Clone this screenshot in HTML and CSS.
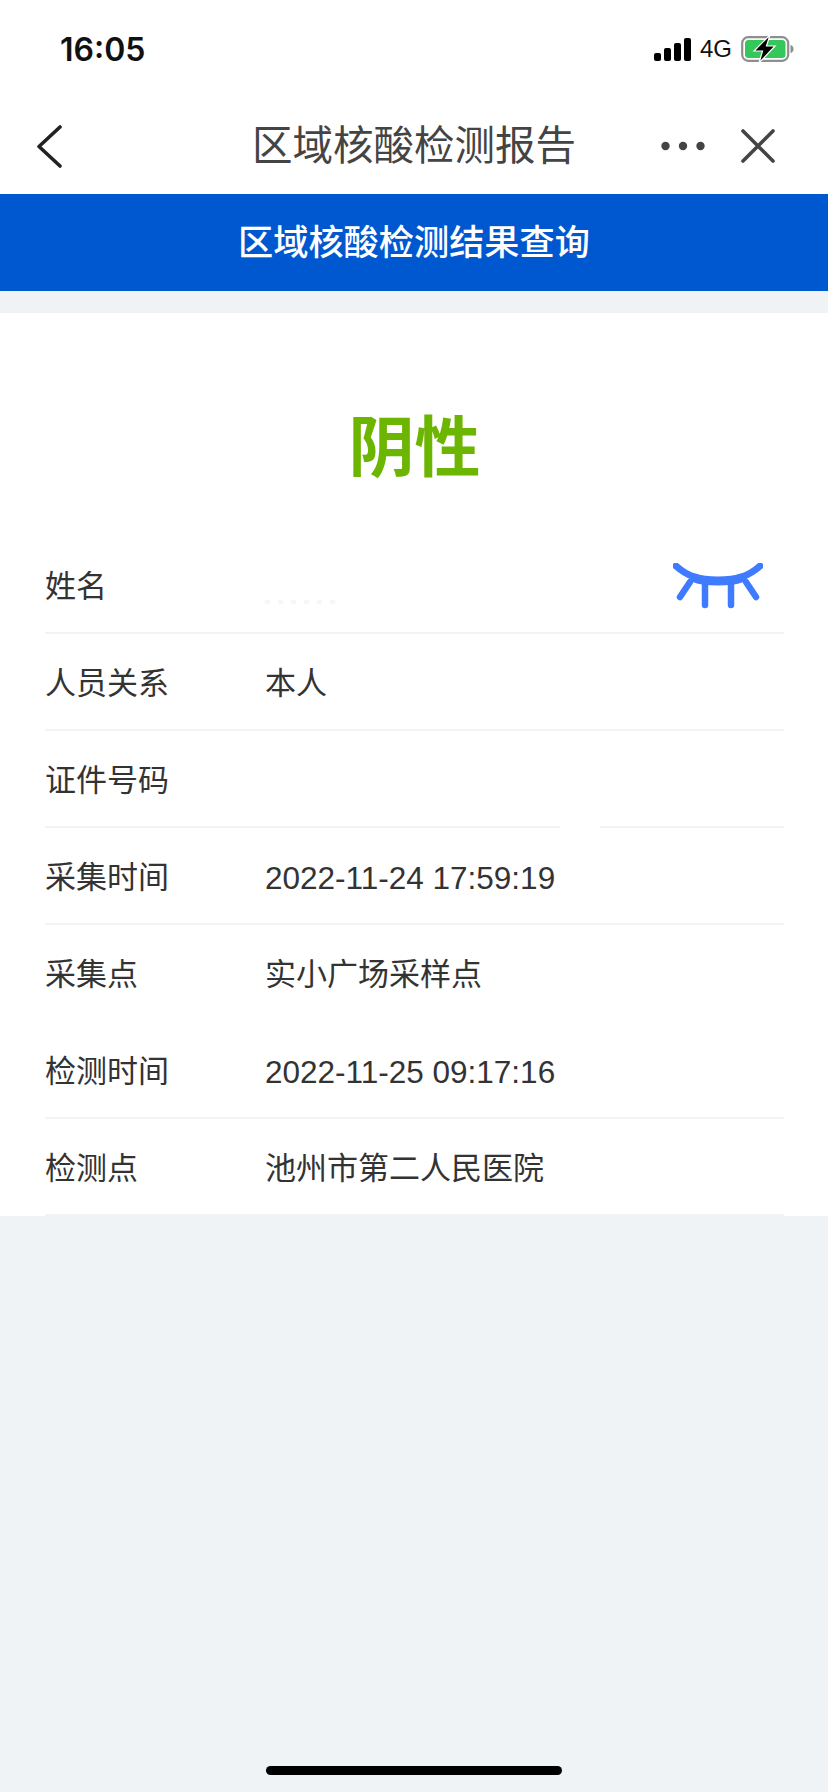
FILE: index.html
```html
<!DOCTYPE html>
<html lang="zh-CN">
<head>
    <meta charset="UTF-8">
    <meta name="viewport" content="width=device-width, initial-scale=1.0">
    <title>区域核酸检测报告</title>
    <link rel="stylesheet" href="styles.css">
</head>
<body>

    <div class="status-bar">
        <span class="clock">16:05</span>
        <div class="status-icons">
            <svg class="signal" width="37" height="23" viewBox="0 0 37 23">
                <rect x="0" y="15" width="7" height="8" rx="2"/>
                <rect x="10" y="10" width="7" height="13" rx="2"/>
                <rect x="20" y="5" width="7" height="18" rx="2"/>
                <rect x="30" y="0" width="7" height="23" rx="2"/>
            </svg>
            <span class="network">4G</span>
            <svg class="battery" width="53" height="28" viewBox="0 0 53 28">
                <rect x="1.2" y="2.2" width="46" height="23.600" rx="6" fill="none" stroke="#8e8e8e" stroke-width="2.200"/>
                <rect x="4" y="5" width="40.5" height="18" rx="3.5" fill="#34c759"/>
                <path d="M49.5 10c2 .4 3 2 3 4s-1 3.600-3 4z" fill="#8e8e8e"/>
                <path d="M29 0 13 16h8.500L18 28 34 11h-8.500z" fill="#000" stroke="#fff" stroke-width="1.200"/>
            </svg>
        </div>
    </div>

    <nav class="top-nav">
        <div class="nav-left">
            <svg width="26" height="43" viewBox="0 0 26 43">
                <path d="M24 2 3 21.500 24 41" fill="none" stroke="#222" stroke-width="3.600" stroke-linecap="round" stroke-linejoin="round"/>
            </svg>
        </div>
        <div class="nav-title">区域核酸检测报告</div>
        <div class="nav-right">
            <svg width="44" height="10" viewBox="0 0 44 10">
                <circle cx="4.500" cy="5" r="4.200" fill="#444"/>
                <circle cx="22" cy="5" r="4.200" fill="#444"/>
                <circle cx="39.500" cy="5" r="4.200" fill="#444"/>
            </svg>
            <svg width="34" height="34" viewBox="0 0 34 34">
                <path d="M2 2 32 32M32 2 2 32" fill="none" stroke="#444" stroke-width="3.600" stroke-linecap="round"/>
            </svg>
        </div>
    </nav>

    <header class="banner">区域核酸检测结果查询</header>

    <main class="report">
        <div class="result">阴性</div>

        <div class="row">
            <span class="label">姓名</span>
            <span class="value"><span class="name-trace"></span></span>
            <svg class="eye" width="90" height="46" viewBox="0 0 90 46">
                <path d="M3 3C14 13 28 18 45 18S76 13 87 3" fill="none" stroke="#3f7bff" stroke-width="7" stroke-linecap="round"/>
                <path d="M22 15C32 19 58 19 68 15" fill="none" stroke="#3f7bff" stroke-width="9" stroke-linecap="round"/>
                <path d="M17 19 7 34M32 20V42M58 20V42M73 19 83 34" fill="none" stroke="#3f7bff" stroke-width="6.500" stroke-linecap="round"/>
            </svg>
        </div>
        <div class="row">
            <span class="label">人员关系</span>
            <span class="value">本人</span>
        </div>
        <div class="row row-id">
            <span class="label">证件号码</span>
            <span class="value"></span>
        </div>
        <div class="row">
            <span class="label">采集时间</span>
            <span class="value date">2022-11-24 17:59:19</span>
        </div>
        <div class="row no-line">
            <span class="label">采集点</span>
            <span class="value">实小广场采样点</span>
        </div>
        <div class="row">
            <span class="label">检测时间</span>
            <span class="value date">2022-11-25 09:17:16</span>
        </div>
        <div class="row">
            <span class="label">检测点</span>
            <span class="value">池州市第二人民医院</span>
        </div>
    </main>

    <div class="home-bar"></div>

</body>
</html>
```

FILE: styles.css
```css
* {
    margin: 0;
    padding: 0;
    box-sizing: border-box;
}

body {
    position: relative;
    height: 1792px;
    overflow: hidden;
    background-color: #f0f3f6;
    color: #333;
    font-family: "Liberation Sans", "Noto Sans CJK SC", sans-serif;
}

.status-bar {
    display: flex;
    align-items: center;
    justify-content: space-between;
    height: 98px;
    padding: 0 34px 0 60px;
    background-color: white;
}

.clock {
    color: #111;
    font-family: Inter, sans-serif;
    font-size: 32px;
    font-weight: 600;
}

.status-icons {
    display: flex;
    align-items: center;
}

.network {
    margin: 0 9px 0 9px;
    color: #111;
    font-size: 24px;
}

.top-nav {
    display: grid;
    grid-template-columns: 1fr auto 1fr;
    align-items: center;
    height: 96px;
    background-color: white;
}

.nav-left {
    display: flex;
    padding-left: 36px;
}

.nav-title {
    color: #444;
    font-size: 40.5px;
    line-height: 1;
}

.nav-right {
    display: flex;
    align-items: center;
    justify-content: flex-end;
    gap: 36px;
    padding-right: 53px;
}

.banner {
    height: 97px;
    background-color: #0058d0;
    color: white;
    font-size: 35.2px;
    font-weight: 500;
    line-height: 97px;
    text-align: center;
}

.report {
    margin-top: 22px;
    padding: 0 44px 0 45px;
    background-color: white;
}

.result {
    height: 224px;
    padding-top: 90px;
    color: #6cb500;
    font-size: 66px;
    font-weight: 700;
    line-height: 90px;
    text-align: center;
}

.row {
    display: flex;
    align-items: center;
    height: 97px;
    padding-bottom: 2px;
    border-bottom: 2px solid #f3f3f3;
    font-size: 31px;
}

.row.no-line {
    border-bottom-color: transparent;
}

/* part of this line is wiped out in the screenshot */
.row-id {
    position: relative;
}

.row-id::after {
    content: "";
    position: absolute;
    left: 515px;
    bottom: -2px;
    width: 40px;
    height: 2px;
    background-color: white;
}

.label {
    width: 220px;
    flex-shrink: 0;
}

.value {
    flex: 1;
}

.date {
    padding-top: 7px;
    font-size: 31.5px;
}

.name-trace {
    display: block;
    width: 72px;
    height: 4px;
    margin-top: 36px;
    background: repeating-linear-gradient(90deg, #f7f7f7 0 5px, white 5px 13px);
}

.eye {
    margin-top: 5px;
    margin-right: 21px;
    filter: blur(0.5px);
}

.home-bar {
    position: absolute;
    left: 266px;
    bottom: 17px;
    width: 296px;
    height: 9px;
    border-radius: 5px;
    background-color: black;
}
```
